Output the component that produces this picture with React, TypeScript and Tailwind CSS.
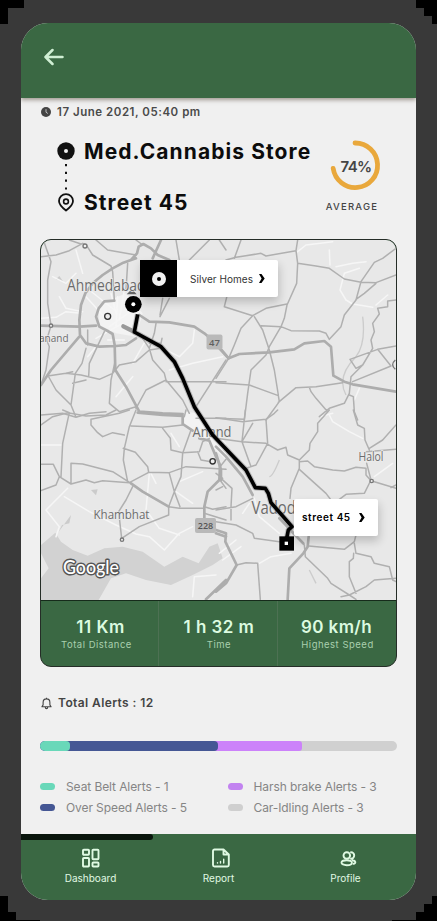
import React from "react";

const thinRoads: { shift: string; d: string }[] = [
  {
    shift: "translate(0 0)",
    d: "M22 30L45 95 35 150 35 220 45 287 32 330 40 350 30 420 15 465M15 80L60 75 100 62 140 40 152 47 170 75 225 108 230 125 235 210M100 30L135 42M180 30L215 60 300 75M300 30L320 45M35 438L90 430 135 435 190 448 230 430 250 405 300 395 340 360 375 355M35 435L60 480 105 525 120 562M105 525L118 430 138 400 150 355M110 460L150 450M205 305L160 400 158 440M236 400L225 450 220 520 250 545 300 530M155 345V300M310 310L340 355 350 390 385 430 390 450 440 510 460 550M390 455H570M390 450L330 480 300 535M480 530L570 390M360 280L355 310 340 355M380 205L372 255M372 260L400 205M15 555L80 550 120 562 160 550 210 545M340 340L375 340 378 325M420 30L430 90M460 90L520 30M550 30L570 60M275 100L270 180M110 425L90 430",
  },
  {
    shift: "translate(540 0)",
    d: "M75 30L55 85M35 190L25 230M30 90L60 82 135 70 150 78 240 62M245 30L240 62 245 100 242 160 213 225 205 265 195 290 160 350 150 375 105 420 95 490 85 570M245 100L300 108 340 115 385 147 435 157 480 158 540 135M25 230L110 257 150 235 213 222M110 257L75 295 55 345 38 385 0 445M115 260L140 300 160 360 175 420 187 495M135 287L195 290 225 302 310 303 330 310 340 328M340 328L375 290 385 255 420 210 435 155 475 97 500 85 540 55M420 208L445 190 480 160M0 458L100 465 187 497 190 515 150 570M187 517L240 473 300 470 380 458M540 210L515 213 515 230 485 235 490 252 470 280 475 305 465 330 470 355 440 405 420 415 402 388 485 358 525 408 410 455M485 358L540 348M440 405L405 440 400 490 385 520 340 535 310 560M400 495L412 500 415 545 425 570M280 472L285 485 300 505 335 545M0 565L85 568",
  },
  {
    shift: "translate(0 540)",
    d: "M15 45L50 20 95 8 150 18 210 15 240 0M100 8L80 100 75 200M165 28L165 45 185 68 200 80 230 68 265 75M165 28L250 10 280 0M300 0L280 50 265 115 262 150 275 215M285 48L380 52 440 45M380 55L403 85 405 120 440 128 490 125 500 95 520 85M262 115L298 127 335 170 338 187M15 163L52 163 70 200 105 222 150 210 175 218 200 212 280 218 338 187 400 188 450 170 570 178M70 200L60 225 15 242M105 222V160L140 162 230 185 285 220M398 290L430 295 500 295M290 230L270 270 248 305 257 385 310 350 398 315 398 290 415 245 400 190M415 245L432 290M465 60L440 130 435 200 415 245M485 125L495 150 525 155M505 290L530 298 570 290M505 310L570 330M450 0L445 20M480 25L570 25M552 210L570 235M552 170L570 148M80 0L100 8",
  },
  {
    shift: "translate(540 540)",
    d: "M0 23L80 35 150 28 175 10 185 0M88 0L78 95 0 85M78 95L110 40M78 95L105 170M150 28L155 100 120 165 90 175M78 95L150 100 185 120 210 112 215 135 250 150M340 0L305 40 305 65 282 100 280 120 250 150 250 175 225 235 222 265M250 155L275 153 295 170 350 180 385 183 420 172 450 175M250 178L330 250 345 270M412 0L425 45 445 55 447 90 460 120M460 115L500 90 540 45M450 125L540 118M452 160L465 210 445 250 390 253 370 268M450 175L450 195 465 212 490 220 540 235M540 225L525 233M15 205L48 235 45 290 45 330M0 300L60 290 110 265M0 335L60 345 110 370 115 385 190 395M62 465L90 458 125 460 133 568M225 365L265 405 268 440 335 505 345 520 400 555 450 530 475 510 540 505M400 555L420 568M413 430L412 445 400 455 400 500 420 550M278 408L385 418 415 395 420 375M415 400L420 430 465 440 475 460 520 470 530 510 540 515M375 560L400 555M0 190L20 205M0 240L20 230",
  },
];

const wideRoads: { shift: string; d: string }[] = [
  {
    shift: "translate(0 0)",
    d: "M300 85L262 98 230 115 200 135 170 160 148 190 135 225 130 270 132 315 150 340 190 350 240 348 270 345 300 325M262 98L285 90 303 70 308 50 322 42 345 55 365 75 400 90M235 212L205 214 188 235 180 260 190 290 215 303 230 312 236 345 238 420 270 470 310 545 380 550 440 552M15 287L130 290 180 287M15 465L45 420 130 320M310 255L340 275 400 277 475 290 505 310 540 340 578 385M375 30L350 85",
  },
  {
    shift: "translate(540 0)",
    d: "M10 355L38 385 70 372 160 367 235 358 265 340 325 333 345 350 352 437 385 455 410 463 540 485",
  },
  {
    shift: "translate(0 540)",
    d: "M305 8L380 15 440 18M440 20L440 42 470 62M490 85L520 92 540 140 552 165 550 210 515 245 505 290 505 330M285 220L320 245 398 290M540 370L570 380M510 568L570 510",
  },
  {
    shift: "translate(540 540)",
    d: "M0 110L30 140 80 200 110 255M0 130L15 180 15 210M0 360L30 370 28 395 62 465 30 520 0 545M278 380L275 410 262 430 220 475 215 568M190 325L262 400",
  },
];

const paleRoads: { shift: string; d: string }[] = [
  {
    shift: "translate(0 0)",
    d: "M50 140L90 160 120 130M70 200L90 235 140 245M15 265L60 262 90 245 135 250M150 200L200 255M160 180L235 240M225 190L240 250M245 200L240 290M265 180L250 270M290 240L220 290M180 325L260 280M475 300L470 340 430 380 370 350M400 420L470 400 560 380M330 330L290 400M155 380L180 350M240 500L290 440M120 60L140 130M215 330L265 330",
  },
  {
    shift: "translate(540 0)",
    d: "M245 65L270 45 350 35M340 60L342 105M360 110L410 100 450 95M430 115L385 130 372 180 390 210 410 222 470 232M430 475L415 510M310 560L350 550M515 195L480 225",
  },
  {
    shift: "translate(0 540)",
    d: "M85 260L160 305 240 345 300 372 340 380 385 420 430 370 470 350M95 235L30 300 70 350 60 380M15 105H75M340 190L330 300 370 355 430 375M420 245L470 280M430 215L500 185M470 560L475 500 540 495M405 70L430 110M345 190L360 220",
  },
  {
    shift: "translate(540 540)",
    d: "M340 15L350 35 400 65 440 85M130 460L165 440 225 430M115 265L130 320 190 370M475 200L530 160M20 450L75 410M60 390L10 430M100 280L80 310",
  },
];

function RoadLayer({ roads, color, width }: { roads: { shift: string; d: string }[]; color: string; width: number }) {
  return (
    <g fill="none" stroke={color} strokeWidth={width} strokeLinejoin="round" strokeLinecap="round">
      {roads.map((r) => (
        <path key={r.shift} transform={r.shift} d={r.d} />
      ))}
    </g>
  );
}

const route =
  "M305 253L295 306 375 350 415 395 440 445 475 530 530 615 630 720 658 773 688 775 697 790 705 818 768 890 757 900 752 925";

function RoadMap() {
  return (
    <svg viewBox="41 240 355 360" className="block h-[360px] w-[355px] bg-[#e8e8e8]" fontFamily="'Open Sans', 'Noto Sans', sans-serif">
      <g transform="translate(36 230) scale(.33333)">
        <path d="M15 945L58 908 75 935 110 960 155 977 205 955 260 950 320 965 385 1010 440 980 488 1000 520 950 545 940 560 985 530 1005 470 1035 405 1065 330 1050 270 1030 225 1045 205 1080 185 1115H15V1045L38 1015 15 970Z" fill="#d2d2d2" />
        <path d="M68 905L105 855 100 880 78 885ZM165 780L185 778 180 796ZM60 148L70 138 82 155Z" fill="#cbcbcb" />
        <path d="M188 225L235 205 270 190 320 250 300 320 240 310 190 285ZM445 545L490 550 570 640 570 690 500 625 445 580Z" fill="#f3f3f3" />
        <path d="M980 260Q990 340 960 380Q900 440 930 495M730 690Q710 740 700 740M820 1020L840 1060" fill="none" stroke="#cccccc" strokeWidth="4" />
        <RoadLayer roads={paleRoads} color="#f6f6f6" width={4.5} />
        <RoadLayer roads={thinRoads} color="#b0b0b0" width={4.5} />
        <RoadLayer roads={wideRoads} color="#adadad" width={8} />
        <g fill="#eee" stroke="#777" strokeWidth="4">
          <circle cx="147" cy="48" r="6" />
          <circle cx="45" cy="287" r="5" />
          <circle cx="258" cy="929" r="5" />
          <circle cx="1007" cy="753" r="5" />
          <circle cx="215" cy="259" r="9" stroke="#333" />
          <circle cx="530" cy="694" r="8" stroke="#333" />
        </g>
        <path d="M1078 390Q1062 404 1078 418" fill="none" stroke="#777" strokeWidth="4" />
        <path d="M262 289L296 306" stroke="#999" strokeWidth="13" strokeLinecap="round" />
        <path d="M272 193L288 177 302 193Z" fill="#666" />
      </g>
      <g fill="#6c6c6c" stroke="#ececec" strokeWidth="1.5" paintOrder="stroke">
        <text x="67" y="290.500" fontSize="16" textLength="78.500" lengthAdjust="spacingAndGlyphs">Ahmedabad</text>
        <text x="39" y="341.500" fontSize="11.500" textLength="29.500" lengthAdjust="spacingAndGlyphs">anand</text>
        <text x="192.500" y="436.500" fontSize="14.500" textLength="39" lengthAdjust="spacingAndGlyphs">Anand</text>
        <text x="93.500" y="518.500" fontSize="13.500" textLength="56" lengthAdjust="spacingAndGlyphs">Khambhat</text>
        <text x="358.500" y="461" fontSize="12" textLength="25" lengthAdjust="spacingAndGlyphs">Halol</text>
        <text x="251.500" y="514" fontSize="18" textLength="67" lengthAdjust="spacingAndGlyphs">Vadodara</text>
      </g>
      <rect x="206.500" y="334.500" width="16" height="15" rx="2" fill="#b9b9b9" />
      <text x="214.500" y="345.500" fontSize="9.500" fontWeight="600" textAnchor="middle" fill="#606060">47</text>
      <rect x="195" y="518" width="21" height="15" rx="2" fill="#b9b9b9" />
      <text x="205.500" y="529" fontSize="9" fontWeight="600" textAnchor="middle" fill="#555">228</text>
      <text x="63" y="574" fontFamily="Lato, sans-serif" fontWeight="500" fontSize="19.500" textLength="56" lengthAdjust="spacingAndGlyphs" fill="#fff" stroke="#555" strokeWidth="3" strokeLinejoin="round" paintOrder="stroke">Google</text>
      <g transform="translate(36 230) scale(.33333)" fill="none" strokeLinejoin="round">
        <path d={route} stroke="#8e8e8e" strokeWidth="17" opacity=".5" />
        <path d={route} stroke="#000" strokeWidth="11" />
        <circle cx="292" cy="223" r="25" fill="#000" />
        <circle cx="292" cy="223" r="6" fill="#fff" />
        <rect x="730" y="919" width="44" height="43" fill="#000" />
        <rect x="746" y="935" width="10" height="10" fill="#fff" />
      </g>
    </svg>
  );
}

function Chevron() {
  return (
    <svg viewBox="0 0 6 9" className="h-[9px] w-[6px]">
      <path d="M0 0H2.500L5.700 4.500L2.500 9H0L2.600 4.500Z" fill="#000" />
    </svg>
  );
}

const stats = [
  { value: "11 Km", label: "Total Distance", column: "w-[117px] pr-[6px]", text: "tracking-[0.5px] translate-x-[4px]" },
  { value: "1 h 32 m", label: "Time", column: "w-[119px] pl-[2px]", text: "tracking-[0.45px]" },
  { value: "90 km/h", label: "Highest Speed", column: "w-[119px] pl-px", text: "tracking-[0.4px] translate-x-[-1px]" },
];

function Legend({ color, text }: { color: string; text: string }) {
  return (
    <div className="flex h-[21px] items-center gap-[11px]">
      <span className={"h-[7px] w-[15px] rounded-full " + color} />
      <span className="whitespace-nowrap text-[12px] tracking-[-0.09px] text-[#858585]">{text}</span>
    </div>
  );
}

export default function App() {
  return (
    <div className="relative flex h-[921px] w-[437px] bg-[#393939] pl-[21px] pt-[23px] font-['Inter',sans-serif]">
      <svg viewBox="0 0 437 921" className="pointer-events-none absolute inset-0 h-[921px] w-[437px]">
        <path d="M0 0H24V8H8V24H0ZM416 0H437V24H432V16H424V8H416ZM0 896H8V912H16V920H40V921H0ZM437 896H432V904H424V912H416V920H392V921H437Z" fill="#000" />
      </svg>
      <div className="relative flex h-[877px] w-[395px] flex-col overflow-hidden rounded-[27px] bg-[#f0f0f0]">
        <header className="z-10 h-[75px] shrink-0 bg-[#3a6843] pl-[23px] pt-[25px] shadow-[0_2px_4px_rgba(80,65,50,0.5)]">
          <svg viewBox="0 0 20 18" className="h-[18px] w-[20px]" fill="none" stroke="#cfeed3" strokeWidth="2.500" strokeLinecap="round" strokeLinejoin="round">
            <path d="M18.500 9H2M8.500 2L1.500 9L8.500 16" />
          </svg>
        </header>

        <main className="flex h-[736px] shrink-0 flex-col px-[19px]">
          <div className="mt-[7px] flex h-[14px] items-center gap-[6px] pl-px text-[#4a4a4a]">
            <svg viewBox="0 0 10 10" className="h-[10px] w-[10px]">
              <circle cx="5" cy="5" r="5" fill="#444" />
              <path d="M5 2.200V5.200L6.800 6.500" fill="none" stroke="#ccc" strokeWidth=".9" />
            </svg>
            <span className="translate-y-px whitespace-nowrap text-[11.500px] font-semibold leading-none tracking-[0.53px]">17 June 2021, 05:40 pm</span>
          </div>

          <section className="mt-[14px] flex h-[106px] justify-between">
            <div className="flex gap-[9px] pl-[17px]">
              <svg viewBox="0 0 18 86" className="h-[86px] w-[18px]" fill="none" stroke="#111">
                <circle cx="9" cy="18" r="8.700" fill="#111" stroke="none" />
                <circle cx="9" cy="18" r="2" fill="#f0f0f0" stroke="none" />
                <path d="M9 31V58" strokeWidth="2" strokeDasharray="2.200 5.600" />
                <path d="M9 77.500C5 74.500 2 71.500 2 68A7 6.800 0 0 1 16 68C16 71.500 13 74.500 9 77.500Z" strokeWidth="1.800" strokeLinejoin="round" />
                <circle cx="9" cy="68.500" r="2.400" strokeWidth="1.600" />
              </svg>
              <div className="flex flex-col gap-[27px] pt-[7px] text-[21px] font-bold leading-[24px] text-[#0c0c0c]">
                <span className="whitespace-nowrap tracking-[1.08px]">Med.Cannabis Store</span>
                <span className="whitespace-nowrap tracking-[1.08px]">Street 45</span>
              </div>
            </div>
            <div className="-ml-[8px] flex w-[70px] translate-x-[-9px] flex-col items-center pt-[6px]">
              <div className="grid h-[52px] w-[52px] translate-x-[2px] place-items-center">
                <svg viewBox="0 0 52 52" className="col-start-1 row-start-1 h-[52px] w-[52px]">
                  <path d="M26 4A22.300 22.300 0 1 1 4.200 29.500" fill="none" stroke="#e9a83c" strokeWidth="4.800" strokeLinecap="round" />
                </svg>
                <span className="col-start-1 row-start-1 translate-x-[1px] translate-y-[2px] text-[15px] font-semibold tracking-[-0.6px] text-[#454545]">74%</span>
              </div>
              <span className="mt-[10px] translate-x-[-1px] text-[9.500px] font-medium leading-[12px] tracking-[1.2px] text-[#444]">AVERAGE</span>
            </div>
          </section>

          <section className="relative h-[428px] shrink-0 w-[357px] overflow-hidden rounded-[11px] border border-[#252d27] bg-[#3a6843]">
            <RoadMap />
            <div className="absolute left-[99px] top-[20px] flex h-[37px] w-[138px] items-center rounded-[2px] bg-white shadow-[1px_5px_10px_rgba(0,0,0,0.2)]">
              <div className="flex h-full w-[37px] items-center justify-center bg-black">
                <span className="h-[14px] w-[14px] rounded-full border-[5px] border-[#f1f1f1]" />
              </div>
              <span className="ml-[13px] mr-[6px] translate-y-px whitespace-nowrap text-[10px] tracking-[0.05px] text-[#333]">Silver Homes</span>
              <Chevron />
            </div>
            <div className="absolute left-[253px] top-[259px] flex h-[37px] w-[84px] items-center rounded-[2px] bg-white pl-[8px] shadow-[1px_5px_10px_rgba(0,0,0,0.2)]">
              <span className="mr-[8px] whitespace-nowrap text-[10px] font-semibold tracking-[0.57px] text-black">street 45</span>
              <Chevron />
            </div>
            <div className="flex h-[66px] border-t border-[#162b1b]">
              {stats.map((s, i) => (
                <div key={s.label} className={"flex flex-col items-center pt-[15px] text-center " + s.column + (i ? " border-l border-[#4d7153]" : "")}>
                  <span className={"whitespace-nowrap text-[17px] font-semibold leading-[22px] text-[#dcfbe0] " + s.text}>{s.value}</span>
                  <span className="whitespace-nowrap text-[9.500px] leading-[13px] tracking-[0.5px] text-[#a9cfae]">{s.label}</span>
                </div>
              ))}
            </div>
          </section>

          <div className="mt-[28px] flex h-[16px] items-center gap-[6px] pl-px">
            <svg viewBox="0 0 12 14" className="h-[13px] w-[11px]" fill="none" stroke="#444" strokeWidth="1.200" strokeLinejoin="round">
              <path d="M1 10.500H11L9.700 8.500V6A3.700 4 0 0 0 2.300 6V8.500ZM4.600 10.800C4.700 13.200 7.300 13.200 7.400 10.800M6 2V.8" />
            </svg>
            <span className="text-[12px] font-semibold tracking-[0.4px] text-[#444]">Total Alerts : 12</span>
          </div>

          <div className="mt-[30px] flex h-[10px] shrink-0 w-[357px] rounded-[5px] bg-[#d0d0d0]">
            <div className="h-full w-[262px] rounded-l-[5px] rounded-r-[3px] bg-[#cc82fa]">
              <div className="h-full w-[178px] rounded-l-[5px] rounded-r-[4px] bg-[#455794]">
                <div className="h-full w-[30px] rounded-l-[5px] rounded-r-[4px] bg-[#69d8b9]" />
              </div>
            </div>
          </div>

          <div className="mt-[25px] grid grid-cols-[187.500px_1fr]">
            <Legend color="bg-[#69d8b9]" text="Seat Belt Alerts - 1" />
            <Legend color="bg-[#c283f0]" text="Harsh brake Alerts - 3" />
            <Legend color="bg-[#455794]" text="Over Speed Alerts - 5" />
            <Legend color="bg-[#cfcfcf]" text="Car-Idling Alerts - 3" />
          </div>
        </main>

        <nav className="flex h-[66px] shrink-0 flex-col bg-[#3a6843] text-[#e0fae3]">
          <div className="h-[6px] w-[132px] shrink-0 rounded-r-[3px] bg-[#0a160d]" />
          <div className="flex pt-[8px] text-[10px]">
            <div className="flex w-[139px] flex-col items-center">
              <svg viewBox="0 0 20 20" className="h-[20px] w-[20px]" fill="none" stroke="currentColor" strokeWidth="1.900">
                <rect x="2" y="1.800" width="6" height="5" rx=".8" />
                <rect x="11.500" y="1.800" width="6" height="9.500" rx=".8" />
                <rect x="2" y="10" width="6" height="8.500" rx=".8" />
                <rect x="11.500" y="14.500" width="6" height="4" rx=".8" />
              </svg>
              <span className="mt-[4px] leading-[13px]">Dashboard</span>
            </div>
            <div className="flex w-[117px] flex-col items-center">
              <svg viewBox="0 0 20 20" className="h-[20px] w-[20px] translate-x-[2px]" fill="none" stroke="currentColor" strokeWidth="1.900" strokeLinejoin="round" strokeLinecap="round">
                <path d="M3.500 1.500H12.500L17.800 6.500V17A1.500 1.500 0 0 1 16.300 18.500H3.500A1.500 1.500 0 0 1 2 17V3A1.500 1.500 0 0 1 3.500 1.500ZM12.500 1.500V6.500H17.800" />
                <path d="M6.500 15V14.800M9.500 15V13.500M12.700 15V11.300" strokeWidth="1.400" />
              </svg>
              <span className="mt-[4px] leading-[13px]">Report</span>
            </div>
            <div className="flex w-[137px] flex-col items-center">
              <svg viewBox="0 0 20 20" className="h-[20px] w-[20px] translate-x-[3px]" fill="none" stroke="currentColor" strokeWidth="1.900" strokeLinecap="round">
                <circle cx="7.800" cy="7.500" r="3.300" />
                <ellipse cx="7.700" cy="14.700" rx="5.200" ry="2.500" />
                <path d="M12 4.300A3.200 3.200 0 0 1 12 10.700M13.500 12.500C16.800 12.300 17.300 15.500 14.500 15.800" />
              </svg>
              <span className="mt-[4px] leading-[13px]">Profile</span>
            </div>
          </div>
        </nav>
      </div>
    </div>
  );
}
